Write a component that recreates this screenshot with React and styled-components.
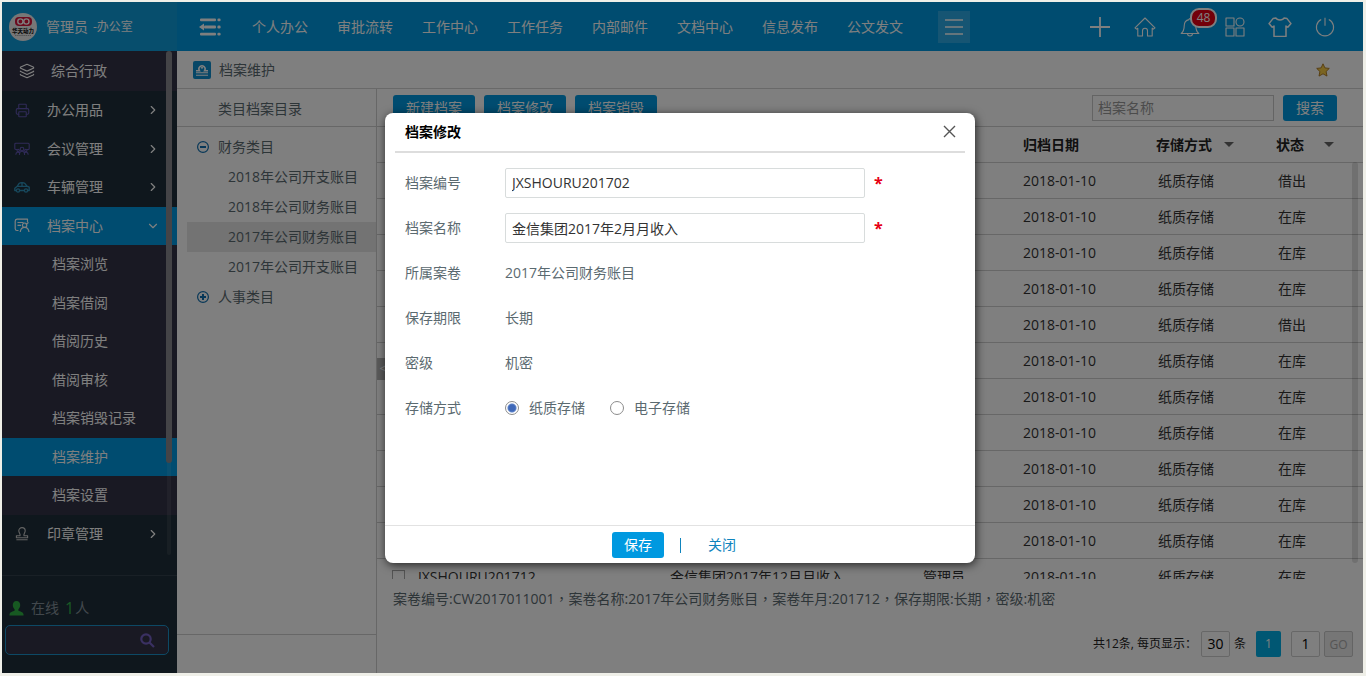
import React, { useState } from 'react';
import styled, { createGlobalStyle } from 'styled-components';
import { Layers, Printer, ChevronRight, ChevronDown } from 'lucide-react';

const GlobalStyle = createGlobalStyle`
  * {
    box-sizing: border-box;
  }

  body {
    margin: 0;
    background: #efefe8;
    font-family: "Open Sans", "Noto Sans CJK SC", sans-serif;
    font-size: 14px;
    line-height: 20px;
    color: #5b6a70;
  }

  button,
  input {
    font: inherit;
    margin: 0;
  }

  a {
    color: inherit;
    text-decoration: none;
  }

  ul {
    list-style: none;
    margin: 0;
    padding: 0;
  }
`;

const Frame = styled.div`
  height: 100vh;
  padding: 2px 3px 3px 2px;
`;

const Shell = styled.div`
  position: relative;
  display: flex;
  flex-direction: column;
  height: 100%;
  overflow: hidden;
  background: #fff;
`;

/* top bar */

const TopBar = styled.header`
  display: flex;
  flex: none;
  height: 49px;
  background: #0099e0;
  color: #fff;
`;

const UserBox = styled.div`
  display: flex;
  align-items: center;
  width: 175px;
  padding-left: 7px;
  background: #0e9cdb;

  .name {
    margin: 0 5px 0 9px;
  }

  .dept {
    font-size: 12px;
  }
`;

const MainMenu = styled.nav`
  display: flex;
  flex: 1;
  align-items: center;
  gap: 29px;
  padding-left: 22px;
`;

const IconButton = styled.button`
  display: flex;
  align-items: center;
  justify-content: center;
  border: 0;
  padding: 0;
  background: none;
  color: inherit;
`;

const ToggleButton = styled(IconButton)`
  justify-content: flex-start;
  width: 24px;
`;

const MoreButton = styled(IconButton)`
  width: 32px;
  height: 32px;
  margin-left: 6px;
  background: #2caae6;
`;

const Tools = styled.div`
  display: flex;
  align-items: center;
  padding-right: 16px;
`;

const Tool = styled(IconButton)`
  position: relative;
  width: 45px;
  height: 48px;
`;

const Badge = styled.span`
  position: absolute;
  top: 5px;
  left: 23px;
  width: 27px;
  height: 20px;
  border: 2px solid #fff;
  border-radius: 9px;
  background: #e60012;
  font-size: 12px;
  line-height: 16px;
  text-align: center;
`;

/* left menu */

const Body = styled.div`
  display: flex;
  flex: 1;
  min-height: 0;
`;

const Sidebar = styled.aside`
  position: relative;
  display: flex;
  flex-direction: column;
  width: 175px;
  background: #1f2f3a;
  color: #fff;
`;

const Menu = styled.ul`
  display: flex;
  flex: 1;
  flex-direction: column;
  padding-bottom: 22px;
`;

const MenuItem = styled.li`
  display: flex;
  flex: 1;

  a {
    display: flex;
    flex: 1;
    align-items: center;
    padding: 0 17px 0 12px;
    background: ${(props) => (props.$active ? '#0099e0' : 'transparent')};
  }

  .icon {
    display: flex;
    justify-content: center;
    width: 16px;
    margin-right: 17px;
    color: ${(props) => props.$tint || '#fff'};
  }

  .arrow {
    margin-left: auto;
  }
`;

const MenuTitle = styled.li`
  display: flex;
  align-items: center;
  height: 40px;
  padding-left: 17px;
  gap: 16px;
  background: #323246;
`;

const SubMenu = styled.ul`
  display: flex;
  flex: 7;
  flex-direction: column;
  background: #323246;
`;

const SubItem = styled.li`
  display: flex;
  flex: 1;

  a {
    display: flex;
    flex: 1;
    align-items: center;
    padding-left: 50px;
    background: ${(props) => (props.$active ? '#0099e0' : 'transparent')};
  }
`;

const SideTrack = styled.div`
  position: absolute;
  top: 0;
  right: 6px;
  width: 4px;
  height: 504px;
  border-radius: 2px;
  background: rgba(255, 255, 255, 0.08);
`;

const SideThumb = styled.div`
  position: absolute;
  top: 0;
  right: 5px;
  width: 6px;
  height: 412px;
  border-radius: 3px;
  background: #88888e;
`;

const Online = styled.div`
  height: 98px;
  padding: 22px 8px 18px 3px;
  border-top: 1px solid #33404c;

  p {
    display: flex;
    align-items: center;
    margin: 0 0 7px;
    padding-left: 4px;
    color: #84919a;
  }

  svg {
    margin-right: 7px;
  }

  b {
    margin: 0 1px 0 6px;
    font-size: 16px;
    font-weight: 400;
    color: #32b34a;
  }
`;

const SideSearch = styled.div`
  display: flex;
  align-items: center;
  height: 30px;
  padding-right: 6px;
  border: 1px solid #1b93cb;
  border-radius: 5px;
  background: #323246;

  input {
    flex: 1;
    min-width: 0;
    border: 0;
    background: none;
    color: #fff;
    outline: 0;
  }
`;

/* page */

const Page = styled.main`
  display: flex;
  flex: 1;
  flex-direction: column;
  min-width: 0;
`;

const PageTitle = styled.div`
  display: flex;
  flex: none;
  align-items: center;
  height: 38px;
  padding: 0 33px 0 16px;
  border-bottom: 1px solid #d2d2d2;

  h1 {
    flex: 1;
    margin: 0 0 0 8px;
    font-size: 14px;
    font-weight: 400;
  }
`;

const Columns = styled.div`
  display: flex;
  flex: 1;
  min-height: 0;
`;

const TreePane = styled.section`
  display: flex;
  flex-direction: column;
  width: 200px;
  border-right: 1px solid #cfcfcf;

  h2 {
    height: 38px;
    margin: 0;
    padding: 10px 0 0 41px;
    border-bottom: 1px solid #cfcfcf;
    font-size: 14px;
    line-height: 20px;
    font-weight: 400;
  }
`;

const Tree = styled.ul`
  flex: 1;
  padding: 5px 0 0 10px;
`;

const TreeNode = styled.li`
  display: flex;
  align-items: center;
  height: 30px;
  padding-left: ${(props) => (props.$child ? '41px' : '10px')};
  background: ${(props) => (props.$selected ? '#e6e6e6' : 'transparent')};

  svg {
    margin-right: 9px;
  }
`;

const TreeFoot = styled.div`
  height: 39px;
  border-top: 1px solid #cfcfcf;
`;

const ListPane = styled.section`
  position: relative;
  display: flex;
  flex: 1;
  flex-direction: column;
  min-width: 0;
`;

const Collapse = styled.button`
  position: absolute;
  top: 269px;
  left: 0;
  width: 12px;
  height: 22px;
  border: 0;
  padding: 0;
  background: #b4b4b4;
  color: #fff;
  font-size: 12px;
  line-height: 20px;
`;

const Toolbar = styled.div`
  display: flex;
  flex: none;
  align-items: center;
  gap: 9px;
  height: 38px;
  padding: 0 26px 0 16px;
  border-bottom: 1px solid #cfcfcf;

  input {
    width: 182px;
    height: 26px;
    margin-left: auto;
    border: 1px solid #c8c8c8;
    padding: 0 5px;
    background: #fff;
  }

  input::placeholder {
    color: #999;
  }
`;

const Button = styled.button`
  width: ${(props) => props.$width};
  height: 26px;
  border: 0;
  border-radius: 3px;
  padding: 0;
  background: #0099e0;
  color: #fff;
`;

const TableWrap = styled.div`
  position: relative;
  flex: 1;
  min-height: 0;
  overflow: hidden;
`;

const Table = styled.table`
  width: 100%;
  table-layout: fixed;
  border-collapse: separate;
  border-spacing: 0;
  color: #333;

  th,
  td {
    height: 36px;
    padding: 0;
    border-bottom: 1px solid #cfcfcf;
    text-align: left;
  }

  th {
    color: #222;
  }

  input {
    appearance: none;
    display: block;
    width: 13px;
    height: 13px;
    margin-left: 15px;
    border: 1px solid #a8a8a8;
    background: #fff;
  }

  input:checked {
    background: #0099e0;
  }
`;

const SortLabel = styled.span`
  display: flex;
  align-items: center;
  gap: ${(props) => props.$gap || '12px'};
  margin-left: -2px;

  &::after {
    content: '';
    border: 5px solid transparent;
    border-top-color: #666;
    border-bottom: 0;
  }
`;

const ListThumb = styled.div`
  position: absolute;
  top: 35px;
  right: 5px;
  width: 6px;
  height: 401px;
  border-radius: 3px;
  background: rgba(0, 0, 0, 0.12);
`;

const Summary = styled.p`
  flex: none;
  margin: 0;
  padding: 10px 16px 8px;

  /* full-width comma set in the middle of its cell */
  i {
    font-family: "Noto Sans CJK TC", sans-serif;
    font-style: normal;
    line-height: 16px;
  }
`;

const Pager = styled.div`
  display: flex;
  flex: none;
  align-items: center;
  justify-content: flex-end;
  gap: 4px;
  padding: 14px 10px 16px;
  font-size: 12px;
  line-height: 26px;
  color: #222;

  label {
    display: flex;
    gap: 4px;
  }

  input {
    width: 29px;
    height: 26px;
    border: 1px solid #cfcfcf;
    border-radius: 2px;
    padding: 0;
    background: #fff;
    font-size: 14px;
    text-align: center;
  }
`;

const PageNumber = styled.button`
  width: 25px;
  height: 26px;
  margin: 0 6px;
  border: 0;
  border-radius: 2px;
  padding: 0;
  background: #00afe6;
  color: #fff;
`;

const GoButton = styled.button`
  width: 29px;
  height: 26px;
  border: 1px solid #c8c8c8;
  border-radius: 2px;
  padding: 0;
  background: #ececec;
  color: #aaa;
`;

/* dialog */

const Overlay = styled.div`
  position: absolute;
  inset: 0;
  display: flex;
  align-items: center;
  justify-content: center;
  padding-right: 5px;
  background: rgba(0, 0, 0, 0.5);
`;

const Dialog = styled.form`
  display: flex;
  flex-direction: column;
  width: 590px;
  min-height: 450px;
  border-radius: 8px;
  background: #fff;
  box-shadow: 1px 2px 10px rgba(0, 0, 0, 0.7);
`;

const DialogHead = styled.div`
  display: flex;
  align-items: center;
  justify-content: space-between;
  height: 40px;
  margin: 0 10px;
  padding: 0 9px 0 10px;
  border-bottom: 2px solid #ddd;

  h3 {
    margin: 0;
    font-size: 14px;
    color: #000;
  }
`;

const Fields = styled.div`
  display: flex;
  flex: 1;
  flex-direction: column;
  gap: 15px;
  padding: 15px 20px;
`;

const Field = styled.div`
  display: flex;
  align-items: center;
  height: 30px;

  .label {
    width: 100px;
  }

  .required {
    margin-left: 9px;
    font-size: 16px;
    font-weight: 700;
    color: #e60012;
  }
`;

const TextInput = styled.input`
  width: 360px;
  height: 30px;
  border: 1px solid #d8dcdc;
  border-radius: 2px;
  padding: 0 6px;
  color: #333;
`;

const Radio = styled.label`
  display: flex;
  align-items: center;
  gap: 10px;
  margin-right: 25px;

  input {
    appearance: none;
    width: 14px;
    height: 14px;
    border: 1px solid #8c8c8c;
    border-radius: 50%;
    background: #fff;
  }

  input:checked {
    background: radial-gradient(circle, #3f68b8 0 3px, #5d82c8 4px, #fff 5px);
  }
`;

const DialogFoot = styled.div`
  display: flex;
  align-items: center;
  justify-content: center;
  height: 38px;
  padding-top: 2px;
  border-top: 1px solid #e2e2e2;

  i {
    width: 1px;
    height: 15px;
    margin: 0 15px 0 16px;
    background: #0f84bd;
  }
`;

const CloseLink = styled.button`
  height: 26px;
  border: 0;
  padding: 0 12px;
  background: none;
  color: #0f84bd;
`;

const Stroke = ({ w = 20, h = 20, width = 1.1, children }) => (
  <svg
    width={w}
    height={h}
    viewBox={`0 0 ${w} ${h}`}
    fill="none"
    stroke="currentColor"
    strokeWidth={width}
    strokeLinejoin="round"
  >
    {children}
  </svg>
);

const Avatar = () => (
  <svg width="28" height="28" viewBox="0 0 28 28">
    <circle cx="14" cy="14" r="14" fill="#eeeeee" />
    <rect x="6" y="4" width="17" height="9" rx="4" fill="#d8143c" />
    <circle cx="11.4" cy="8.5" r="2.6" fill="none" stroke="#fff" strokeWidth="1.4" />
    <circle cx="17.4" cy="8.5" r="2.6" fill="none" stroke="#fff" strokeWidth="1.4" />
    <text x="14" y="20" fontSize="5.500" fontWeight="900" fill="#222" textAnchor="middle">华天动力</text>
    <path d="M6 22.5h16" stroke="#aaa" strokeWidth="1" strokeDasharray="1.5 .6" />
  </svg>
);

const ToggleIcon = () => (
  <svg width="22" height="20" viewBox="0 0 22 20" fill="#fff">
    <rect x="1" y="1.500" width="16" height="2.800" rx="1" />
    <rect x="5" y="8.600" width="12" height="2.800" rx="1" />
    <rect x="1" y="15.700" width="16" height="2.800" rx="1" />
    <path d="M0 10l5-3.4v6.8z" />
    <rect x="18.4" y="1.500" width="3.200" height="2.800" rx="1.200" />
    <rect x="18.4" y="8.600" width="3.200" height="2.800" rx="1.200" />
    <rect x="18.4" y="15.700" width="3.200" height="2.800" rx="1.200" />
  </svg>
);

const PlusIcon = () => (
  <Stroke width={1.8}>
    <path d="M10 0v20M0 10h20" />
  </Stroke>
);

const HomeIcon = () => (
  <Stroke w={22}>
    <path d="M1 10.8L11 1l10 9.8-1.6 1.4-1.2-1V19h-4.7v-5.2a2.5 2.5 0 0 0-5 0V19H3.8v-7.8l-1.2 1z" />
  </Stroke>
);

const BellIcon = () => (
  <Stroke>
    <path d="M9 2.6c-3.4.6-4.8 3-4.8 6.4 0 4-1 5.8-3 7.500h17.600c-2-1.700-3-3.500-3-7.500 0-3.400-1.600-5.800-4.800-6.400a1 1 0 0 0-2 0zM7.500 16.500a2.500 2.500 0 0 0 5 0" />
  </Stroke>
);

const GridIcon = () => (
  <Stroke>
    <rect x="1" y="1" width="8" height="8" />
    <circle cx="15" cy="5" r="4" />
    <rect x="1" y="11" width="8" height="8" />
    <rect x="11" y="11" width="8" height="8" />
  </Stroke>
);

const ShirtIcon = () => (
  <Stroke w={24} width={1.5}>
    <path d="M8 1C9 3.600 15 3.600 16 1l3 .6 4 5-3.200 3.600-1.800-1.200v10.400H6V9L4.200 10.200 1 6.600l4-5z" />
  </Stroke>
);

const PowerIcon = () => (
  <Stroke>
    <path d="M6.200 2.600a8.600 8.600 0 1 0 7.600 0M10 .8v8" />
  </Stroke>
);

const MeetingIcon = () => (
  <Stroke w={16} h={14}>
    <path d="M3 7.500H1.800A1 1 0 0 1 .8 6.500V2.200A1 1 0 0 1 1.800 1.200h12.400a1 1 0 0 1 1 1v4.300a1 1 0 0 1-1 1H13" />
    <circle cx="8" cy="7" r="1.800" />
    <circle cx="4.200" cy="8.600" r="1.200" />
    <circle cx="11.800" cy="8.600" r="1.200" />
    <path d="M5.400 13c0-5 5.200-5 5.200 0M1.800 12.800c.2-2.600 2.400-3.400 3.800-2M14.200 12.800c-.2-2.600-2.400-3.400-3.800-2" />
  </Stroke>
);

const CarIcon = () => (
  <Stroke w={16} h={12} width={1.3}>
    <path d="M2.300 9.500H.8V7.200L3 5.500 5 2.600c1.500-1.300 4.500-1.300 6 0l2 2.600 2.200 1v3.300h-1.500M5.800 9.500h4.400M3 5.400h10M8 2v3" />
    <circle cx="4" cy="9.500" r="1.600" />
    <circle cx="12" cy="9.500" r="1.600" />
  </Stroke>
);

const ArchiveIcon = () => (
  <Stroke w={16} h={15} width={1.2}>
    <path d="M4.500 12.500H3A2 2 0 0 1 1.200 10.700V3.200A2 2 0 0 1 3 1.200h10.500v3M3.500 4.500h6M3.500 7.300h3.500" />
    <circle cx="10.600" cy="7.200" r="2.200" />
    <path d="M6.200 14c.4-3 2-4.600 4.400-4.600S14.600 11 15 14M11.800 6.500l2.700-2" />
  </Stroke>
);

const StampIcon = () => (
  <Stroke w={14} h={15}>
    <path d="M5 9.800c.8-1.600-1.200-2.800-1.200-5a3.200 3.200 0 0 1 6.400 0c0 2.200-2 3.400-1.200 5h3.600v2H1.400v-2zM1.400 13.800h11.200" />
  </Stroke>
);

const PersonIcon = () => (
  <svg width="15" height="15" viewBox="0 0 15 15" fill="#2fb344">
    <path d="M7.500 0C5 0 3.800 1.700 3.800 4c0 2 1 3.400 1.800 4.300v1.500C4 10.600 1 11 .5 13.200V14.500h14v-1.300C14 11 11 10.600 9.400 9.800V8.300C10.200 7.400 11.200 6 11.200 4c0-2.300-1.200-4-3.700-4z" />
  </svg>
);

const SearchIcon = () => (
  <svg width="15" height="15" viewBox="0 0 15 15" fill="none" stroke="#7461c4" strokeWidth="2.200">
    <circle cx="6" cy="6" r="4.700" />
    <path d="M9.500 9.500l4.500 4.500" />
  </svg>
);

const PageIcon = () => (
  <svg width="18" height="18" viewBox="0 0 18 18">
    <rect width="18" height="18" rx="2" fill="#0e8fce" />
    <path d="M3 9.700h3.400a3.100 3.100 0 1 1 5.200 0H15" fill="none" stroke="#fff" strokeWidth="1.500" />
    <circle cx="9" cy="6.800" r="1" fill="#fff" />
    <path d="M3 11.800h12M3 14.200h12" stroke="#fff" strokeWidth="1.100" />
  </svg>
);

const StarIcon = () => (
  <svg width="14" height="14" viewBox="0 0 14 14">
    <path
      d="M7 .8l1.900 4.100 4.400.5-3.200 3.100.9 4.600L7 10.800l-4 2.300.9-4.600L.7 5.400l4.400-.5z"
      fill="#f7cb45"
      stroke="#a8741c"
      strokeWidth=".9"
    />
  </svg>
);

const NodeIcon = ({ open }) => (
  <svg width="12" height="12" viewBox="0 0 12 12" fill="none" stroke="#0f6fb0">
    <circle cx="6" cy="6" r="5.400" strokeWidth="1.200" />
    <path d={open ? 'M3 6h6' : 'M3 6h6M6 3v6'} strokeWidth="2" />
  </svg>
);

const topMenu = ['个人办公', '审批流转', '工作中心', '工作任务', '内部邮件', '文档中心', '信息发布', '公文发文'];

const tools = [
  { label: '新建', Icon: PlusIcon },
  { label: '首页', Icon: HomeIcon },
  { label: '提醒', Icon: BellIcon, count: 48 },
  { label: '应用', Icon: GridIcon },
  { label: '换肤', Icon: ShirtIcon },
  { label: '退出', Icon: PowerIcon },
];

const subMenu = ['档案浏览', '档案借阅', '借阅历史', '借阅审核', '档案销毁记录', '档案维护', '档案设置'];

const treeItems = ['2018年公司开支账目', '2018年公司财务账目', '2017年公司财务账目', '2017年公司开支账目'];

const summary = ['案卷编号:CW2017011001', '案卷名称:2017年公司财务账目', '案卷年月:201712', '保存期限:长期', '密级:机密'];

const records = Array.from({ length: 12 }, (_, i) => {
  const month = i + 1;
  return {
    code: `JXSHOURU2017${String(month).padStart(2, '0')}`,
    name: `金信集团2017年${month}月月收入`,
    owner: '管理员',
    date: '2018-01-10',
    storage: '纸质存储',
    status: i === 0 || i === 4 ? '借出' : '在库',
  };
});

const SideLink = ({ icon, tint, active, children }) => (
  <MenuItem $tint={tint} $active={active}>
    <a href="#menu">
      <span className="icon">{icon}</span>
      {children}
      {active ? (
        <ChevronDown className="arrow" size={14} />
      ) : (
        <ChevronRight className="arrow" size={14} />
      )}
    </a>
  </MenuItem>
);

const EditDialog = () => {
  const [code, setCode] = useState('JXSHOURU201702');
  const [name, setName] = useState('金信集团2017年2月月收入');
  const [storage, setStorage] = useState('纸质存储');

  return (
    <Dialog onSubmit={(e) => e.preventDefault()}>
      <DialogHead>
        <h3>档案修改</h3>
        <IconButton type="button" aria-label="关闭窗口">
          <svg width="13" height="13" viewBox="0 0 13 13" stroke="#555" strokeWidth="1.400">
            <path d="M1 1l11 11M12 1L1 12" />
          </svg>
        </IconButton>
      </DialogHead>
      <Fields>
        <Field>
          <label className="label" htmlFor="code">档案编号</label>
          <TextInput id="code" value={code} onChange={(e) => setCode(e.target.value)} />
          <span className="required">*</span>
        </Field>
        <Field>
          <label className="label" htmlFor="name">档案名称</label>
          <TextInput id="name" value={name} onChange={(e) => setName(e.target.value)} />
          <span className="required">*</span>
        </Field>
        <Field>
          <span className="label">所属案卷</span>
          <span>2017年公司财务账目</span>
        </Field>
        <Field>
          <span className="label">保存期限</span>
          <span>长期</span>
        </Field>
        <Field>
          <span className="label">密级</span>
          <span>机密</span>
        </Field>
        <Field>
          <span className="label">存储方式</span>
          {['纸质存储', '电子存储'].map((item) => (
            <Radio key={item}>
              <input
                type="radio"
                name="storage"
                checked={storage === item}
                onChange={() => setStorage(item)}
              />
              {item}
            </Radio>
          ))}
        </Field>
      </Fields>
      <DialogFoot>
        <Button type="submit" $width="52px">保存</Button>
        <i />
        <CloseLink type="button">关闭</CloseLink>
      </DialogFoot>
    </Dialog>
  );
};

const App = () => {
  return (
    <Frame>
      <GlobalStyle />
      <Shell>
        <TopBar>
          <UserBox>
            <Avatar />
            <span className="name">管理员</span>
            <span className="dept">-办公室</span>
          </UserBox>
          <MainMenu>
            <ToggleButton aria-label="收起菜单">
              <ToggleIcon />
            </ToggleButton>
            {topMenu.map((item) => (
              <a href="#top" key={item}>{item}</a>
            ))}
            <MoreButton aria-label="更多">
              <Stroke w={20} h={18} width={1.6}>
                <path d="M1 2h18M1 9h18M1 16h18" />
              </Stroke>
            </MoreButton>
          </MainMenu>
          <Tools>
            {tools.map(({ label, Icon, count }) => (
              <Tool key={label} aria-label={label}>
                <Icon />
                {count && <Badge>{count}</Badge>}
              </Tool>
            ))}
          </Tools>
        </TopBar>

        <Body>
          <Sidebar>
            <Menu>
              <MenuTitle>
                <Layers size={16} strokeWidth={1.7} />
                综合行政
              </MenuTitle>
              <SideLink icon={<Printer size={15} strokeWidth={1.7} />} tint="#5f55b0">办公用品</SideLink>
              <SideLink icon={<MeetingIcon />} tint="#5f55b0">会议管理</SideLink>
              <SideLink icon={<CarIcon />} tint="#2f93bd">车辆管理</SideLink>
              <SideLink icon={<ArchiveIcon />} active>档案中心</SideLink>
              <SubMenu>
                {subMenu.map((item) => (
                  <SubItem key={item} $active={item === '档案维护'}>
                    <a href="#sub">{item}</a>
                  </SubItem>
                ))}
              </SubMenu>
              <SideLink icon={<StampIcon />} tint="#c8c8c8">印章管理</SideLink>
            </Menu>
            <SideTrack />
            <SideThumb />
            <Online>
              <p>
                <PersonIcon />
                在线<b>1</b>人
              </p>
              <SideSearch>
                <input aria-label="搜索人员" />
                <IconButton aria-label="搜索">
                  <SearchIcon />
                </IconButton>
              </SideSearch>
            </Online>
          </Sidebar>

          <Page>
            <PageTitle>
              <PageIcon />
              <h1>档案维护</h1>
              <IconButton aria-label="收藏">
                <StarIcon />
              </IconButton>
            </PageTitle>
            <Columns>
              <TreePane>
                <h2>类目档案目录</h2>
                <Tree>
                  <TreeNode>
                    <NodeIcon open />
                    财务类目
                  </TreeNode>
                  {treeItems.map((item, index) => (
                    <TreeNode key={item} $child $selected={index === 2}>{item}</TreeNode>
                  ))}
                  <TreeNode>
                    <NodeIcon />
                    人事类目
                  </TreeNode>
                </Tree>
                <TreeFoot />
              </TreePane>

              <ListPane>
                <Toolbar>
                  <Button $width="82px">新建档案</Button>
                  <Button $width="82px">档案修改</Button>
                  <Button $width="82px">档案销毁</Button>
                  <input placeholder="档案名称" aria-label="档案名称" />
                  <Button $width="54px">搜索</Button>
                </Toolbar>
                <TableWrap>
                  <Table>
                    <colgroup>
                      <col width="41" />
                      <col width="252" />
                      <col />
                      <col width="100" />
                      <col width="135" />
                      <col width="120" />
                      <col width="85" />
                    </colgroup>
                    <thead>
                      <tr>
                        <th><input type="checkbox" aria-label="全选" /></th>
                        <th>档案编号</th>
                        <th>档案名称</th>
                        <th>归档人</th>
                        <th>归档日期</th>
                        <th><SortLabel>存储方式</SortLabel></th>
                        <th><SortLabel $gap="20px">状态</SortLabel></th>
                      </tr>
                    </thead>
                    <tbody>
                      {records.map((item) => (
                        <tr key={item.code}>
                          <td><input type="checkbox" aria-label={item.code} /></td>
                          <td>{item.code}</td>
                          <td>{item.name}</td>
                          <td>{item.owner}</td>
                          <td>{item.date}</td>
                          <td>{item.storage}</td>
                          <td>{item.status}</td>
                        </tr>
                      ))}
                    </tbody>
                  </Table>
                  <ListThumb />
                </TableWrap>
                <Summary>
                  {summary.map((item, index) => (
                    <React.Fragment key={item}>
                      {index > 0 && <i lang="zh-TW">，</i>}
                      {item}
                    </React.Fragment>
                  ))}
                </Summary>
                <Pager>
                  <label>
                    共12条, 每页显示：
                    <input defaultValue="30" />
                    条
                  </label>
                  <PageNumber>1</PageNumber>
                  <input defaultValue="1" aria-label="页码" />
                  <GoButton disabled>GO</GoButton>
                </Pager>
                <Collapse aria-label="收起目录">&lt;</Collapse>
              </ListPane>
            </Columns>
          </Page>
        </Body>

        <Overlay>
          <EditDialog />
        </Overlay>
      </Shell>
    </Frame>
  );
};

export default App;
